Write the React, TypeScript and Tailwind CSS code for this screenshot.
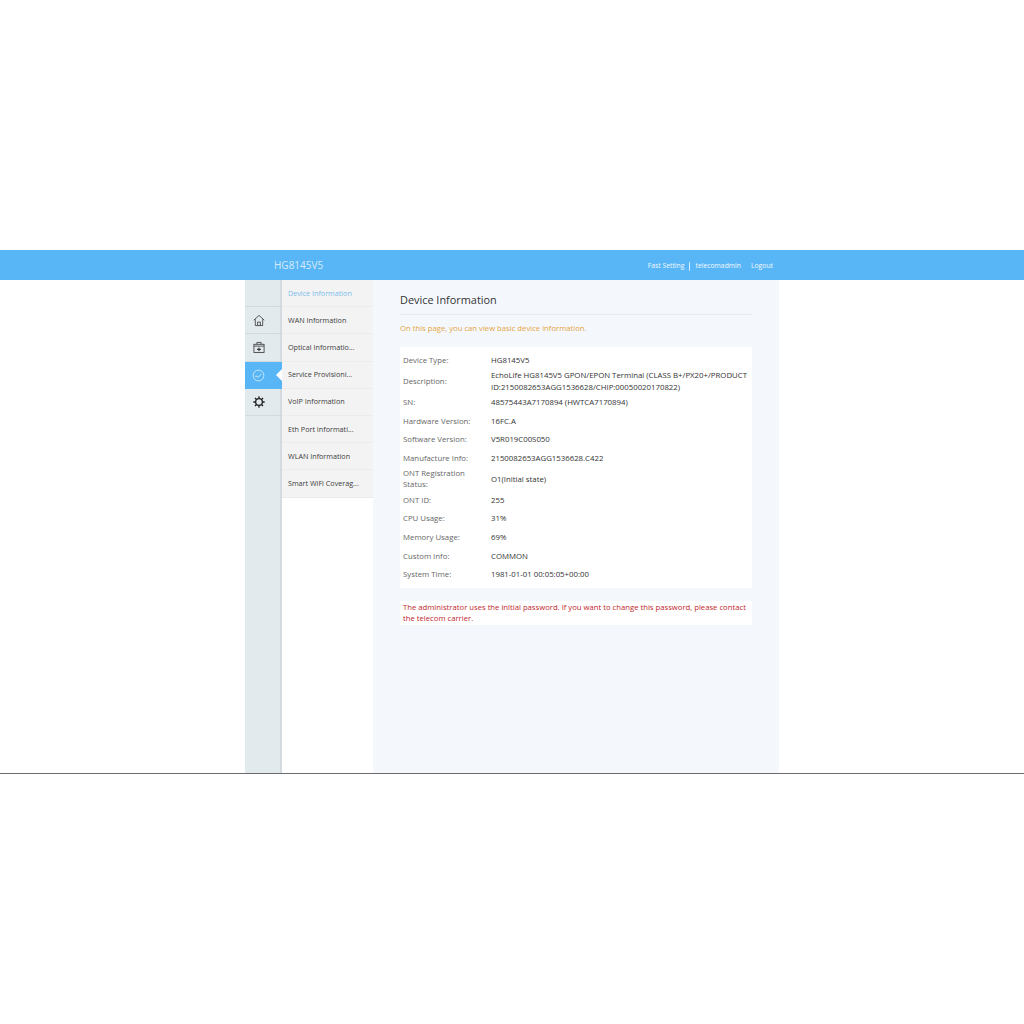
const menuItems = [
  "Device Information",
  "WAN Information",
  "Optical Informatio...",
  "Service Provisioni...",
  "VoIP Information",
  "Eth Port Informati...",
  "WLAN Information",
  "Smart WiFi Coverag...",
];

const rows = [
  { label: "Device Type:", value: "HG8145V5", h: "h-[18.7px]" },
  {
    label: "Description:",
    value: "EchoLife HG8145V5 GPON/EPON Terminal (CLASS B+/PX20+/PRODUCT ID:2150082653AGG1536628/CHIP:00050020170822)",
    h: "h-[23px]",
  },
  { label: "SN:", value: "48575443A7170894 (HWTCA7170894)", h: "h-[18.7px]" },
  { label: "Hardware Version:", value: "16FC.A", h: "h-[18.7px]" },
  { label: "Software Version:", value: "V5R019C00S050", h: "h-[18.7px]" },
  { label: "Manufacture Info:", value: "2150082653AGG1536628.C422", h: "h-[18.7px]" },
  { label: "ONT Registration Status:", value: "O1(Initial state)", h: "h-[23px]" },
  { label: "ONT ID:", value: "255", h: "h-[18.7px]" },
  { label: "CPU Usage:", value: "31%", h: "h-[18.7px]" },
  { label: "Memory Usage:", value: "69%", h: "h-[18.7px]" },
  { label: "Custom Info:", value: "COMMON", h: "h-[18.7px]" },
  { label: "System Time:", value: "1981-01-01 00:05:05+00:00", h: "h-[18.7px]" },
];

const HomeIcon = () => (
  <svg width="12" height="13" viewBox="0 0 13 13" fill="none" stroke="#3a3a3a" strokeWidth="0.9">
    <path d="M0.8 6.2 L6.5 1 L12.2 6.2" />
    <path d="M2.5 5.2 V12 H10.5 V5.2" />
    <path d="M5 12 V8.2 H8 V12" />
  </svg>
);

const CaseIcon = () => (
  <svg width="12" height="13" viewBox="0 0 13 13" fill="none" stroke="#3a3a3a" strokeWidth="0.9">
    <path d="M4.2 3 V1 H8.8 V3" />
    <rect x="1" y="3" width="11" height="9" />
    <path d="M1 5 H12" />
    <path d="M6.5 6.4 V10.6 M4.4 8.5 H8.6" strokeWidth="1.2" />
  </svg>
);

const GaugeIcon = () => (
  <svg width="13" height="13" viewBox="0 0 14 14" fill="none" stroke="#cfe9fb" strokeWidth="1">
    <circle cx="7" cy="7" r="5.8" />
    <path d="M3.4 7.8 L5.6 7.8 L6.6 9 L10.2 5.2" />
  </svg>
);

const GearIcon = () => (
  <svg width="12" height="12" viewBox="0 0 14 14" fill="none" stroke="#1f1f1f" strokeWidth="1.5">
    <circle cx="7" cy="7" r="3.9" />
    <path d="M7 0.4 V3 M7 11 V13.6 M0.4 7 H3 M11 7 H13.6 M2.3 2.3 L4.2 4.2 M9.8 9.8 L11.7 11.7 M11.7 2.3 L9.8 4.2 M4.2 9.8 L2.3 11.7" />
  </svg>
);

export default function App() {
  return (
    <div className="w-[1024px] h-[1024px] bg-white overflow-hidden font-['Open_Sans','Noto_Sans',sans-serif] text-[7.8px]">
      <div className="h-[250px]" />

      <header className="h-[30px] bg-[#59b6f6] flex items-center pl-[274px] pr-[251px]">
        <span className="text-[10px] text-[#d5ecfc]">HG8145V5</span>
        <nav className="ml-auto flex items-center text-[#f2f9fe] text-[6.8px] pt-[3px]">
          <span>Fast Setting</span>
          <span className="w-px h-[9px] bg-[#d5ecfc] mx-[5px]" />
          <span>telecomadmin</span>
          <span className="ml-[10px]">Logout</span>
        </nav>
      </header>

      <div className="h-[493px] ml-[245px] w-[534px] flex">
        {/* icon rail */}
        <aside className="w-[37px] bg-[#e3eaed] shadow-[inset_-2px_0_1px_#d3dadf] flex flex-col">
          <div className="h-[27.2px] border-b border-[#d3dadf]" />
          <div className="h-[27.2px] border-b border-[#d3dadf] flex items-center justify-center pr-[10px]">
            <HomeIcon />
          </div>
          <div className="h-[27.2px] border-b border-[#d3dadf] flex items-center justify-center pr-[10px]">
            <CaseIcon />
          </div>
          <div className="relative h-[27.2px] bg-[#59b6f6] flex items-center justify-center pr-[10px]">
            <GaugeIcon />
            <span className="absolute right-0 top-[7px] w-0 h-0 border-y-[6px] border-y-transparent border-r-[6px] border-r-white" />
          </div>
          <div className="h-[27.2px] border-b border-[#d3dadf] flex items-center justify-center pr-[10px]">
            <GearIcon />
          </div>
        </aside>

        {/* second level menu */}
        <div className="w-[91px] shrink-0 text-[7.2px]">
          {menuItems.map((item, i) => (
            <div
              key={item}
              className={`h-[27.2px] bg-[#f3f3f3] border-b border-[#ececec] pl-[6px] flex items-center whitespace-nowrap ${
                i === 0 ? "text-[#7cbde9]" : "text-[#3d3d3d]"
              }`}
            >
              {item}
            </div>
          ))}
        </div>

        <main className="flex-1 bg-[#f4f8fd] px-[27px]">
          <h1 className="h-[35px] pt-[11px] border-b border-[#e8ecf0] text-[10.9px] leading-[18px] text-[#333]">
            Device Information
          </h1>
          <p className="mt-[7px] text-[#e5a33d] text-[7.7px] leading-[13px]">
            On this page, you can view basic device information.
          </p>
          <div className="mt-[12px] bg-white pt-[4.5px] pb-[3.5px] px-[3px]">
            {rows.map((row) => (
              <div key={row.label} className={`flex items-center ${row.h}`}>
                <div className="w-[88px] shrink-0 pr-[8px] text-[#666] leading-[11.2px]">{row.label}</div>
                <div className="flex-1 text-[#333] leading-[11.2px]">{row.value}</div>
              </div>
            ))}
          </div>
          <div className="mt-[13.5px] bg-white px-[3px] py-[0.5px] text-[#c1272d] text-[7.7px] leading-[11.2px]">
            The administrator uses the initial password. If you want to change this password, please contact the telecom carrier.
          </div>
        </main>
      </div>

      <div className="h-px bg-[#6b6b6b]" />
    </div>
  );
}
